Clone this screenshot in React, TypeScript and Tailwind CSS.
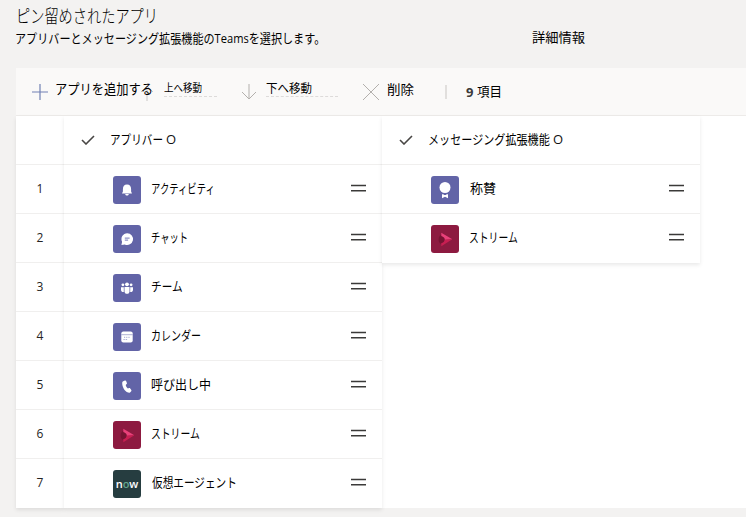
import React from "react";

type AppKind = "bell" | "chat" | "team" | "calendar" | "phone" | "stream" | "now" | "praise";

type PinnedApp = { kind: AppKind; name: string; nameClass: string };

const barApps: PinnedApp[] = [
  { kind: "bell", name: "アクティビティ", nameClass: "ml-2.5 w-[64px]" },
  { kind: "chat", name: "チャット", nameClass: "ml-2.5 w-[37px]" },
  { kind: "team", name: "チーム", nameClass: "ml-2.5 w-[32px]" },
  { kind: "calendar", name: "カレンダー", nameClass: "ml-2.5 w-[50px]" },
  { kind: "phone", name: "呼び出し中", nameClass: "ml-2.5 w-[60px]" },
  { kind: "stream", name: "ストリーム", nameClass: "ml-2.5 w-[49px]" },
  { kind: "now", name: "仮想エージェント", nameClass: "ml-[11px] w-[85px]" },
];

const messagingApps: PinnedApp[] = [
  { kind: "praise", name: "称賛", nameClass: "ml-[11px] w-[26px]" },
  { kind: "stream", name: "ストリーム", nameClass: "ml-2.5 w-[49px]" },
];

/** One line of text, condensed horizontally so that it fills its column width. */
function Fit({ className = "", children }: { className?: string; children: React.ReactNode }) {
  const box = React.useRef<HTMLSpanElement>(null);
  const [scale, setScale] = React.useState(1);
  React.useLayoutEffect(() => {
    const el = box.current;
    if (!el) return;
    const inner = el.firstElementChild as HTMLElement;
    setScale(el.clientWidth / inner.offsetWidth);
  }, []);
  return (
    <span ref={box} className={"block shrink-0 whitespace-nowrap " + className}>
      <span className="inline-block origin-left" style={{ transform: `scaleX(${scale})` }}>
        {children}
      </span>
    </span>
  );
}

function Glyph({ kind }: { kind: AppKind }) {
  switch (kind) {
    case "bell":
      return (
        <svg viewBox="0 0 28 28" className="size-7" fill="#fff">
          <path d="M14 8.500c-2.800 0-4.100 2-4.100 4.600v2.300L9 17.500h10l-.9-2.100v-2.300c0-2.600-1.300-4.600-4.100-4.600z" />
          <path d="M12.200 18h3.600c-.2 1-.9 1.500-1.800 1.500s-1.600-.5-1.800-1.500z" />
        </svg>
      );
    case "chat":
      return (
        <svg viewBox="0 0 28 28" className="size-7">
          <path fill="#fff" d="M14.200 8.200a5.900 5.900 0 1 1-2.400 11.300l-3.400.6.7-3.300a5.900 5.900 0 0 1 5.100-8.600z" />
          <path stroke="#8f91c5" strokeWidth="1.100" d="M11.800 13.100h4.800M11.800 15.100h3.300" />
        </svg>
      );
    case "team":
      return (
        <svg viewBox="0 0 28 28" className="size-7" fill="#fff">
          <circle cx="14" cy="10.300" r="1.900" />
          <circle cx="9.900" cy="10.800" r="1.400" />
          <circle cx="18.100" cy="10.800" r="1.400" />
          <path d="M11.500 13h5v4.200c0 1.600-1 2.600-2.500 2.600s-2.500-1-2.500-2.600z" />
          <path d="M8 13.200h2.800v4.900C9 18.200 8 17.300 8 15.800zM20 13.200h-2.800v4.900c1.800.1 2.800-.8 2.800-2.300z" />
        </svg>
      );
    case "calendar":
      return (
        <svg viewBox="0 0 28 28" className="size-7">
          <rect x="8.300" y="8.500" width="11.400" height="11" rx="2" fill="#fff" />
          <path stroke="#8d8fc2" strokeWidth=".7" d="M8.300 11.700h11.400" />
          <path stroke="#a5a7d0" strokeWidth="1" strokeDasharray="1.200 1" d="M11 14.300h6.500M10.500 16.500h4.500" />
        </svg>
      );
    case "phone":
      return (
        <svg viewBox="0 0 28 28" className="size-7" fill="#fff">
          <path d="M10.200 9.200l1.700-.7c.6-.2 1 0 1.200.5l.8 1.900c.2.500 0 .9-.3 1.200l-.9.800c.3 1.400 1.100 2.600 2.200 3.500l1.200-.3c.4-.1.800 0 1.100.4l1.100 1.600c.3.4.2.9-.1 1.200l-.9.900c-.6.500-1.400.700-2.200.4-3.700-1.600-5.900-5.600-5.900-9.600 0-.8.300-1.500 1-1.800z" />
        </svg>
      );
    case "stream":
      return (
        <svg viewBox="0 0 28 28" className="size-7">
          <path d="M10.300 9.500c-3.400 2-3.600 7.500-.5 9.500l3.200-2v-6z" fill="#761332" />
          <path d="M10.300 7.800L21.300 14.200l-7.300.8c.2-1.800-1.200-3.400-3.700-4.100z" fill="#e8417a" />
          <path d="M10.300 21.200L21.300 14.200l-7.300.3c-.5 2-1.700 3.200-3.700 3.800z" fill="#c81f52" />
        </svg>
      );
    case "now":
      return (
        <span className="flex size-7 items-center justify-center pb-px font-['Open_Sans',sans-serif] text-[11px] leading-none font-semibold text-white">
          n<span className="text-[#62a58c]">o</span>w
        </span>
      );
    case "praise":
      return (
        <svg viewBox="0 0 28 28" className="size-7" fill="#fff">
          <circle cx="14" cy="11.500" r="5.500" />
          <path d="M11 18.200h6v4L14 20.800l-3 1.400z" />
          <path d="M12.700 18h2.600v.9h-2.600z" fill="#6264a7" />
        </svg>
      );
  }
}

function Tile({ kind }: { kind: AppKind }) {
  const color = kind === "stream" ? "bg-[#8d1a40]" : kind === "now" ? "bg-[#263d40]" : "bg-[#6264a7]";
  return (
    <span className={"block size-7 shrink-0 overflow-hidden rounded-[3px] " + color}>
      <Glyph kind={kind} />
    </span>
  );
}

function Handle() {
  return (
    <svg viewBox="0 0 15 8" className="mr-4 mb-[3px] ml-auto h-2 w-[15px] shrink-0" fill="none" stroke="#3b3a39" strokeWidth="1.500">
      <path d="M0 1.500h15M0 6.800h15" />
    </svg>
  );
}

function Check() {
  return (
    <svg viewBox="0 0 14 10" className="mb-px h-2.5 w-3.5 shrink-0" fill="none" stroke="#484644" strokeWidth="1.600">
      <path d="M1 5l4 4 8-8" />
    </svg>
  );
}

/** Faint row of ticks under a disabled command. */
function Ticks({ className }: { className: string }) {
  return <span className={"absolute left-0 block border-b border-dashed border-[#dddbda] " + className} />;
}

function Column({ title, titleClass, apps }: { title: string; titleClass: string; apps: PinnedApp[] }) {
  return (
    <section className="w-[318px] shrink-0 self-start bg-white shadow-[0_2px_4px_rgba(0,0,0,0.09)]">
      <div className="flex h-[49px] items-center border-b border-[#f0efee] pl-[17px]">
        <Check />
        <Fit className={"mb-0.5 ml-[15px] " + titleClass}>{title}</Fit>
        <span className="mb-0.5 ml-[3px] text-[13px] text-[#111]">O</span>
      </div>
      {apps.map((app) => (
        <div key={app.name} className="flex h-[49px] items-center border-b border-[#f0efee] last:border-transparent">
          <span className="mt-0.5 ml-[49px]">
            <Tile kind={app.kind} />
          </span>
          <Fit className={"mb-0.5 " + app.nameClass}>{app.name}</Fit>
          <Handle />
        </div>
      ))}
    </section>
  );
}

export default function App() {
  return (
    <main className="h-[517px] w-[746px] overflow-hidden bg-[#f3f2f1] pl-4 font-['Open_Sans','Noto_Sans_CJK_JP',sans-serif] text-[13px] leading-5 text-black">
      <header className="h-[68px] pt-1">
        <h1>
          <Fit className="h-6 w-[142px] text-[18px] leading-6 font-light">ピン留めされたアプリ</Fit>
        </h1>
        <div className="flex h-5">
          <Fit className="-ml-px w-[310px] text-[13px]">アプリバーとメッセージング拡張機能のTeamsを選択します。</Fit>
          <Fit className="-mt-px ml-[207px] w-[53px]">詳細情報</Fit>
        </div>
      </header>

      <div className="flex h-12 items-center border-b border-[#edebe9] bg-[#faf9f8]">
        <svg viewBox="0 0 16 16" className="ml-4 size-4 shrink-0" stroke="#7180b4" strokeWidth="1.200">
          <path d="M8 0v16M0 8h16" />
        </svg>
        <div className="relative ml-[7px] h-5">
          <svg viewBox="0 0 14 16" className="absolute top-[3px] left-[85px] h-4 w-3.5" fill="none" stroke="#c8c6c4">
            <path d="M7 16V1M1 7l6-6 6 6" />
          </svg>
          <Fit className="relative -top-[3px] w-[98px] text-[14px]">アプリを追加する</Fit>
        </div>
        <div className="relative ml-[11px] h-5">
          <Fit className="relative -top-1 w-[38px] text-[11px]">上へ移動</Fit>
          <Ticks className="top-[14px] w-[53px]" />
        </div>
        <svg viewBox="0 0 16 16" className="ml-[39px] size-4 shrink-0" fill="none" stroke="#b3b0ad">
          <path d="M8 0v15M1 8l7 7 7-7" />
        </svg>
        <div className="relative ml-[9px] h-5">
          <Fit className="relative -top-[3px] w-[46px] text-[12px]">下へ移動</Fit>
          <Ticks className="top-[14px] w-[72px]" />
        </div>
        <svg viewBox="0 0 16 16" className="ml-[51px] size-4 shrink-0" stroke="#b3b0ad">
          <path d="M0 0l16 16M16 0L0 16" />
        </svg>
        <Fit className="-mt-1.5 ml-2 w-[27px]">削除</Fit>
        <span className="ml-[31px] h-3.5 w-0.5 bg-[#e1dfdd]" />
        <span className="ml-[19px] font-bold text-[#3b3a39]">9</span>
        <Fit className="mb-0.5 ml-1 w-[25px]">項目</Fit>
      </div>

      <div className="flex h-[392px] bg-white">
        <div className="w-12 shrink-0 bg-white text-center shadow-[0_2px_4px_rgba(0,0,0,0.09)]">
          <div className="h-[49px] border-b border-[#f0efee]" />
          {barApps.map((app, i) => (
            <div
              key={app.name}
              className="flex h-[49px] items-center justify-center border-b border-[#f0efee] text-[12px] text-[#252423] last:border-transparent"
            >
              {i + 1}
            </div>
          ))}
        </div>
        <Column title="アプリバー" titleClass="w-[53px]" apps={barApps} />
        <Column title="メッセージング拡張機能" titleClass="w-[122px]" apps={messagingApps} />
      </div>
    </main>
  );
}
